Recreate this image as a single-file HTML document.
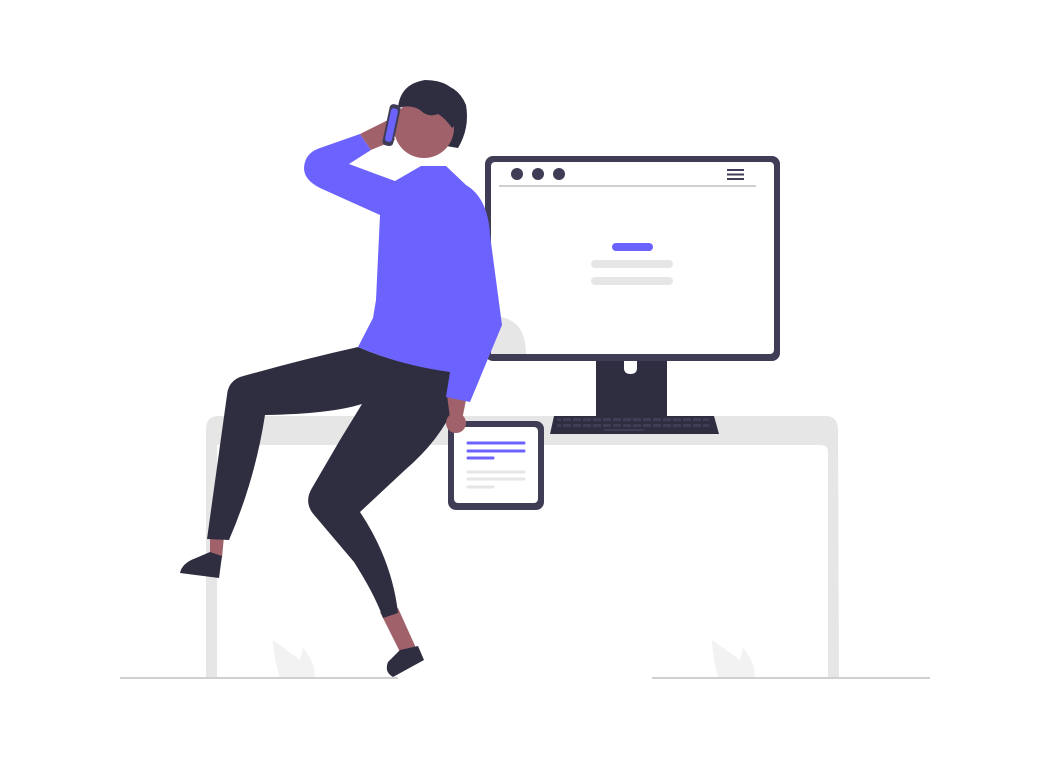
<!DOCTYPE html>
<html><head><meta charset="utf-8"><style>html,body{margin:0;padding:0;background:#fff}svg{display:block}</style></head>
<body>
<svg width="1050" height="760" viewBox="0 0 1050 760" xmlns="http://www.w3.org/2000/svg">
<!-- desk -->
<path d="M218,416 L826,416 Q838,416 838,430 L839,678 L828,678 L828,452 Q828,445 820,445 L217,445 L217,678 L206,678 L206,430 Q206,416 218,416 Z" fill="#e6e6e6"/>
<!-- flames -->
<path d="M273,640 L300,660 L303,648 Q315,662 315,678 L280,678 Q274,660 273,640 Z" fill="#f2f2f2"/>
<path d="M712,640 L740,660 L743,648 Q755,662 755,678 L718,678 Q713,660 712,640 Z" fill="#f2f2f2"/>
<!-- floor -->
<line x1="120" y1="678" x2="398" y2="678" stroke="#d0d0d0" stroke-width="2"/>
<line x1="652" y1="678" x2="930" y2="678" stroke="#d0d0d0" stroke-width="2"/>
<!-- monitor -->
<rect x="596" y="356" width="71" height="62" fill="#2f2e41"/>
<path d="M624,358 L637,358 L637,368 Q637,374 630.5,374 Q624,374 624,368 Z" fill="#fff"/>
<path d="M554,416 L714,416 L719,434 L550,434 Z" fill="#2f2e41"/>
<g fill="#3f3d56">
<rect x="557" y="418" width="152" height="3"/>
<rect x="557" y="424" width="152" height="3"/>
<rect x="604" y="429" width="40" height="2"/>
</g>
<g stroke="#2f2e41" stroke-width="2">
<line x1="562" y1="418" x2="562" y2="427"/><line x1="572" y1="418" x2="572" y2="427"/><line x1="582" y1="418" x2="582" y2="427"/><line x1="592" y1="418" x2="592" y2="427"/><line x1="602" y1="418" x2="602" y2="427"/><line x1="612" y1="418" x2="612" y2="427"/><line x1="622" y1="418" x2="622" y2="427"/><line x1="632" y1="418" x2="632" y2="427"/><line x1="642" y1="418" x2="642" y2="427"/><line x1="652" y1="418" x2="652" y2="427"/><line x1="662" y1="418" x2="662" y2="427"/><line x1="672" y1="418" x2="672" y2="427"/><line x1="682" y1="418" x2="682" y2="427"/><line x1="692" y1="418" x2="692" y2="427"/><line x1="702" y1="418" x2="702" y2="427"/>
</g>
<rect x="485" y="156" width="295" height="205" rx="8" fill="#3f3d56"/>
<rect x="491" y="162" width="283" height="192" rx="4" fill="#fff"/>
<circle cx="517" cy="174" r="6" fill="#3f3d56"/><circle cx="538" cy="174" r="6" fill="#3f3d56"/><circle cx="559" cy="174" r="6" fill="#3f3d56"/>
<g stroke="#3f3d56" stroke-width="2"><line x1="727" y1="170" x2="744" y2="170"/><line x1="727" y1="174.5" x2="744" y2="174.5"/><line x1="727" y1="179" x2="744" y2="179"/></g>
<line x1="499" y1="186" x2="756" y2="186" stroke="#d0d0d0" stroke-width="2"/>
<rect x="612" y="243" width="41" height="8" rx="4" fill="#6c63ff"/>
<rect x="591" y="260" width="82" height="8" rx="4" fill="#e6e6e6"/>
<rect x="591" y="277" width="82" height="8" rx="4" fill="#e6e6e6"/>
<path d="M491,316 Q526,316 526,354 L491,354 Z" fill="#e6e6e6"/>
<!-- tablet -->
<rect x="448" y="421" width="96" height="89" rx="8" fill="#3f3d56"/>
<rect x="454" y="427" width="84" height="76" rx="4" fill="#fff"/>
<g stroke-linecap="round" stroke-width="3">
<line x1="468" y1="443" x2="524" y2="443" stroke="#6c63ff"/><line x1="468" y1="451" x2="524" y2="451" stroke="#6c63ff"/><line x1="468" y1="458" x2="493" y2="458" stroke="#6c63ff"/>
<line x1="468" y1="472" x2="524" y2="472" stroke="#e6e6e6"/><line x1="468" y1="479" x2="524" y2="479" stroke="#e6e6e6"/><line x1="468" y1="487" x2="493" y2="487" stroke="#e6e6e6"/>
</g>
<!-- person -->
<path d="M210,536 L224,536 L222,558 L210,556 Z" fill="#a0616a"/>
<path d="M210,552 L222,556 L219,578 L180,573 Q182,563 196,558 Z" fill="#2f2e41"/>
<path d="M380,612 L398,608 L416,648 L400,652 Z" fill="#a0616a"/>
<path d="M400,650 L418,646 L424,660 L393,677 Q384,672 388,662 Z" fill="#2f2e41"/>
<path d="M358,347 Q300,360 240,377 Q228,382 227,395 L207,539 L229,540 Q255,480 265,415 Q330,414 362,404 L340,440 L312,488 Q303,503 315,516 L354,562 Q375,595 383,618 L398,613 Q392,560 360,512 L405,470 Q440,440 455,405 L452,372 Q400,365 358,347 Z" fill="#2f2e41"/>
<circle cx="456" cy="423" r="10" fill="#a0616a"/>
<path d="M447,395 L466,400 L462,420 L450,418 Z" fill="#a0616a"/>
<path d="M395,181 L421,166 L446,166 L466,185 Q488,198 490,235 L502,325 L470,402 L446,397 L450,372 Q400,365 358,347 L373,318 L376,300 L380,215 L320,188 Q300,178 305,162 Q308,152 320,148 L360,134 L371,150 L349,164 Z" fill="#6c63ff"/>
<path d="M360,134 L388,120 L395,140 L371,150 Z" fill="#a0616a"/>
<path d="M420,85 Q455,78 466,105 Q470,128 458,148 L440,145 Z" fill="#2f2e41"/>
<circle cx="424" cy="128" r="30" fill="#a0616a"/>
<path d="M398,108 Q400,84 425,80 Q452,80 460,100 Q462,120 452,128 Q445,118 438,114 Q428,118 420,110 Q410,104 398,108 Z" fill="#2f2e41"/>
<rect x="386" y="104" width="11" height="42" rx="4" fill="#3f3d56" transform="rotate(12 391 125)"/>
<rect x="388" y="108" width="7" height="34" rx="3" fill="#6c63ff" transform="rotate(12 391 125)"/>
</svg>
</body></html>
